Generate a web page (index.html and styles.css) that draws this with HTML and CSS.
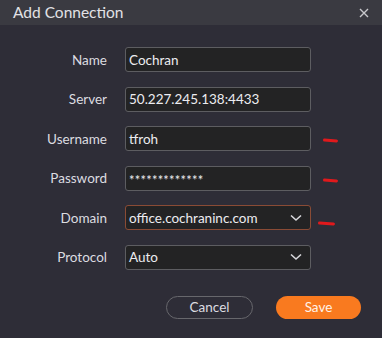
FILE: index.html
```html
<!DOCTYPE html>
<html lang="en">

<head>
    <meta charset="UTF-8" />
    <title>Add Connection</title>
    <link rel="stylesheet" href="styles.css">
</head>

<body>
    <div class="dialog">
        <div class="title-bar">
            <span class="title">Add Connection</span>
            <svg class="close" width="10" height="10" viewBox="0 0 10 10">
                <path d="M1 1 L9 9 M9 1 L1 9" stroke="#c8c8cc" stroke-width="1.4" />
            </svg>
        </div>

        <form class="form">
            <label>Name</label>
            <div class="field">Cochran</div>
            <span></span>

            <label>Server</label>
            <div class="field">50.227.245.138:4433</div>
            <span></span>

            <label>Username</label>
            <div class="field">tfroh</div>
            <span class="mark"></span>

            <label>Password</label>
            <div class="field password">*************</div>
            <span class="mark"></span>

            <label>Domain</label>
            <div class="field select active">
                office.cochraninc.com
                <svg class="chevron" width="12" height="8" viewBox="0 0 12 8">
                    <path d="M1 1.5 L6 6 L11 1.5" fill="none" stroke="#d8d8dc" stroke-width="1.6" />
                </svg>
            </div>
            <span class="mark mark-low"></span>

            <label>Protocol</label>
            <div class="field select">
                Auto
                <svg class="chevron" width="12" height="8" viewBox="0 0 12 8">
                    <path d="M1 1.5 L6 6 L11 1.5" fill="none" stroke="#d8d8dc" stroke-width="1.6" />
                </svg>
            </div>
            <span></span>
        </form>

        <div class="actions">
            <button type="button" class="btn cancel">Cancel</button>
            <button type="button" class="btn save">Save</button>
        </div>
    </div>
</body>

</html>
```

FILE: styles.css
```css
* {
    box-sizing: border-box;
    margin: 0;
    padding: 0;
}

html,
body {
    height: 100%;
    background: #2e2d37;
    font-family: 'Lato', 'Open Sans', sans-serif;
    color: #e6e6ea;
    overflow: hidden;
}

.title-bar {
    height: 25px;
    background: #3a3a41;
    display: flex;
    align-items: center;
    justify-content: space-between;
    padding: 0 13px 2px 13px;
}

.title {
    font-size: 15.5px;
    color: #e2e2e6;
}

.close {
    margin-top: 2px;
}

.form {
    display: grid;
    grid-template-columns: 107px 186px 30px;
    column-gap: 18px;
    row-gap: 14.6px;
    padding-top: 22px;
    align-items: center;
}

.form label {
    text-align: right;
    font-size: 13.5px;
    color: #dcdce0;
}

.field {
    height: 25px;
    background: #232324;
    border: 1.5px solid #5d5d61;
    border-radius: 3px;
    padding: 0 8px 0 3px;
    font-size: 13.5px;
    color: #ececf0;
    display: flex;
    align-items: center;
    justify-content: space-between;
}

.password {
    letter-spacing: 0.2px;
    padding-top: 3px;
    font-size: 13px;
}

.field.active {
    border-color: #8a4b35;
}

.chevron {
    flex-shrink: 0;
}

.mark {
    display: block;
    width: 15px;
    height: 2.5px;
    margin-left: -6px;
    margin-top: 3px;
    background: #e0191c;
    border-radius: 2px;
    transform: rotate(4deg);
}

.mark-low {
    margin-left: -11px;
    margin-top: 11px;
    width: 17px;
}

.actions {
    display: flex;
    gap: 23px;
    padding: 26px 0 0 166px;
}

.btn {
    font-family: inherit;
    font-size: 13.5px;
    height: 23px;
    border-radius: 12px;
    cursor: pointer;
}

.cancel {
    width: 87px;
    background: transparent;
    border: 1.5px solid #67676c;
    color: #dcdce0;
}

.save {
    width: 85px;
    background: #f97a1f;
    border: none;
    color: #fff3e8;
}
```
